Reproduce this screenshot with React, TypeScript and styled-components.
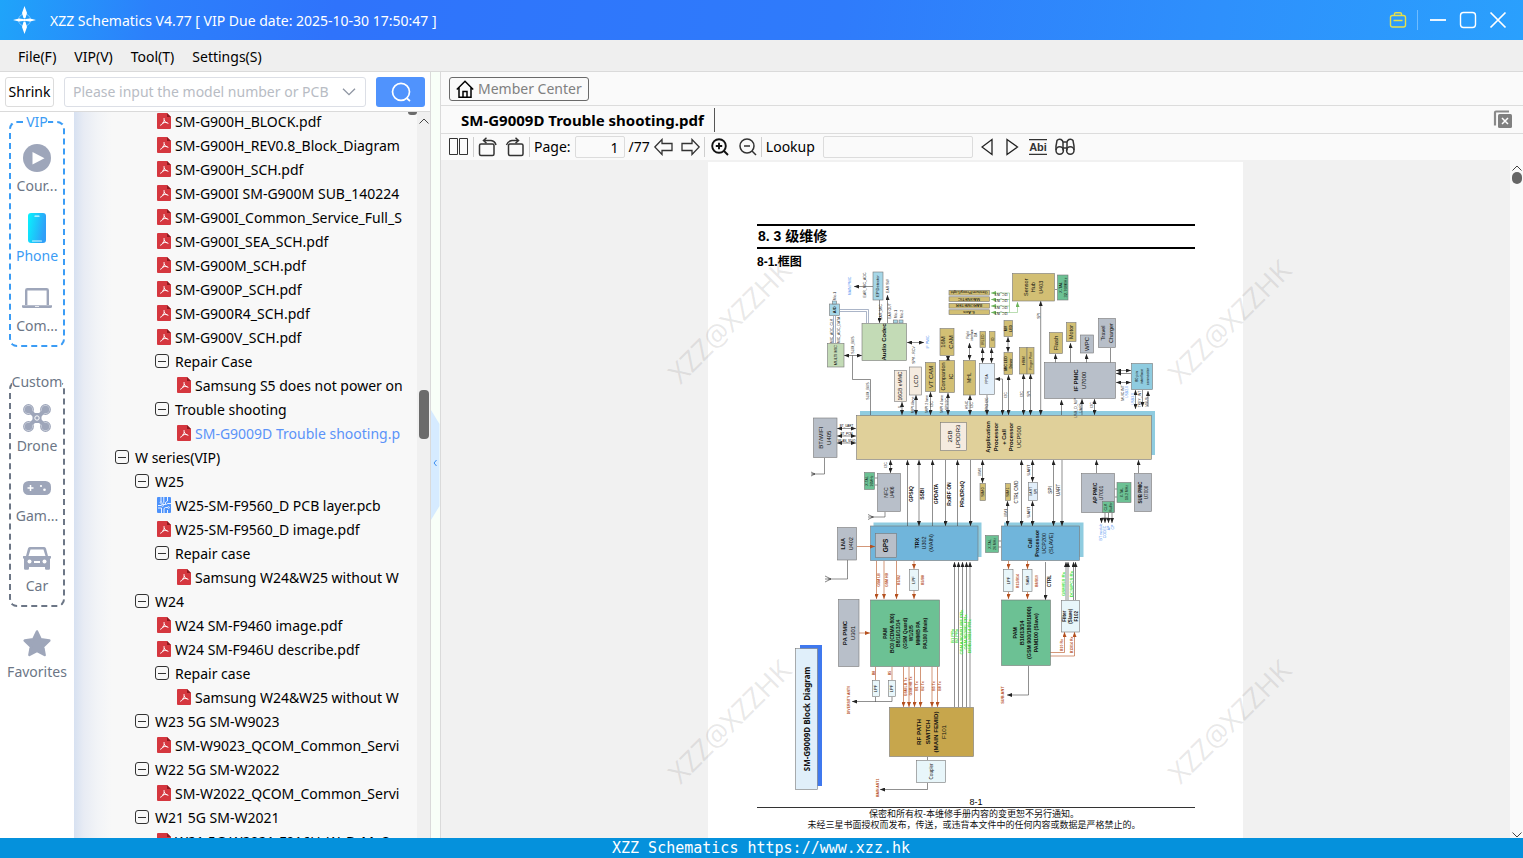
import React from 'react';
import styled, { createGlobalStyle, css } from 'styled-components';

const UI_FONT = '"Noto Sans", "Noto Sans CJK SC", sans-serif';
const DOC_FONT = '"Liberation Sans", "Noto Sans CJK SC", sans-serif';

const GlobalStyle = createGlobalStyle`
  * { box-sizing: border-box; }
  body { margin: 0; font-family: ${UI_FONT}; font-size: 14px; color: #000; }
  button, input { font: inherit; color: inherit; }
  button { cursor: pointer; }
`;

/* ---------- window frame ---------- */

const Window = styled.div`
  display: grid;
  grid-template-rows: 40px 32px minmax(0, 1fr) 20px;
  height: 100vh;
  overflow: hidden;
  background: #fff;
`;

const TitleBar = styled.header`
  display: flex;
  align-items: center;
  padding: 0 15px 0 12px;
  color: #fff;
  background: linear-gradient(100deg, #1fa4fa 0%, #2c80fb 10%, #2f73fb 22%, #2f7bfb 55%, #2e90fc 80%, #2aa0fd 100%);
`;

const Title = styled.h1`
  flex: 1;
  margin: 0 0 0 13px;
  font-size: 14px;
  font-weight: 400;
`;

const WindowControls = styled.div`
  display: flex;
  align-items: center;
  gap: 10px;
`;

const PlainButton = styled.button`
  display: inline-flex;
  align-items: center;
  justify-content: center;
  flex: none;
  padding: 0;
  border: 0;
  background: none;
`;

const TitleDivider = styled.span`
  width: 1px;
  height: 20px;
  background: #6fbcff;
`;

const MenuBar = styled.nav`
  display: flex;
  align-items: center;
  gap: 18px;
  padding: 2px 18px 0;
  background: #efefef;
  border-bottom: 1px solid #dadada;
`;

const MenuItem = styled(PlainButton)`
  line-height: 20px;
`;

const Workspace = styled.div`
  display: grid;
  grid-template-columns: 431px 10px minmax(0, 1fr);
  min-height: 0;
`;

const StatusBar = styled.footer`
  padding-right: 1px;
  color: #fff;
  background: #0591dc;
  font: 15px/20px "DejaVu Sans Mono", monospace;
  text-align: center;
`;

/* ---------- left pane ---------- */

const LeftPane = styled.section`
  display: grid;
  grid-template-rows: 40px minmax(0, 1fr);
  min-height: 0;
  border-right: 1px solid #dadada;
`;

const SearchRow = styled.form`
  display: flex;
  align-items: center;
  gap: 10px;
  padding: 0 5px;
  border-bottom: 1px solid #dadada;
`;

const ShrinkButton = styled(PlainButton)`
  width: 49px;
  height: 30px;
  border: 1px solid #dcdcdc;
  border-radius: 3px;
  background: #fff;
`;

const SearchBox = styled.div`
  display: flex;
  align-items: center;
  flex: 1;
  min-width: 0;
  height: 30px;
  padding: 0 9px 0 8px;
  border: 1px solid #dcdfe6;
  border-radius: 3px;
`;

const SearchInput = styled.input`
  flex: 1;
  min-width: 0;
  padding: 0;
  border: 0;
  outline: 0;
  background: none;
  &::placeholder { color: #b8bcc4; opacity: 1; }
`;

const SearchButton = styled(PlainButton)`
  width: 49px;
  height: 30px;
  border-radius: 3px;
  background: #5093fd;
`;

const Browser = styled.div`
  display: grid;
  grid-template-columns: 74px minmax(0, 1fr) 13px;
  min-height: 0;
`;

const Sidebar = styled.nav`
  display: flex;
  flex-direction: column;
  align-items: center;
  overflow: hidden;
`;

const Group = styled.fieldset<{ $accent?: boolean }>`
  display: flex;
  flex-direction: column;
  width: 56px;
  margin: 0 0 ${p => (p.$accent ? 25 : 20)}px;
  padding: 9px 0;
  border: 2px dashed ${p => (p.$accent ? '#3b9cf5' : '#6c7686')};
  border-radius: 8px;
  color: ${p => (p.$accent ? '#3b9cf5' : '#6c7686')};
`;

const GroupName = styled.legend`
  margin: 0 auto;
  padding: 0;
  line-height: 20px;
`;

const Category = styled(PlainButton)<{ $active?: boolean }>`
  flex-direction: column;
  gap: 1px;
  height: 55px;
  color: ${p => (p.$active ? '#3b9cf5' : '#6c7686')};
  line-height: 20px;
  & + & { margin-top: 15px; }
`;

const CategoryIcon = styled.span`
  display: flex;
  align-items: center;
  height: 34px;
`;

const Tree = styled.ul`
  position: relative;
  margin: 0;
  padding: 0;
  list-style: none;
  overflow: hidden;
  background: linear-gradient(90deg, #d7e1f1 0, #e8ecf4 10px, #f2f4f7 24px, #f8f8f8 38px);
  &::after {
    content: '';
    position: absolute;
    top: 0;
    right: 0;
    width: 9px;
    height: 3px;
    border-radius: 0 0 5px 5px;
    background: #6b6b6b;
  }
`;

const TreeRow = styled.li<{ $level: number; $active?: boolean }>`
  display: flex;
  align-items: center;
  gap: 3px;
  height: 24px;
  margin-right: 10px;
  padding-left: ${p => 40 + p.$level * 20}px;
  overflow: hidden;
  white-space: nowrap;
  color: ${p => (p.$active ? '#5b93f8' : '#000')};
  &:first-child { margin-top: -3px; }
`;

const RowIcon = styled.span<{ $folder?: boolean }>`
  display: flex;
  flex: none;
  width: 18px;
  padding: 0 1px;
  justify-content: ${p => (p.$folder ? 'flex-start' : 'flex-end')};
`;

const TreeScroll = styled.div`
  display: flex;
  flex-direction: column;
  align-items: center;
  padding-top: 6px;
  background: #f0f0f0;
`;

const TreeThumb = styled.span`
  width: 10px;
  height: 49px;
  margin-top: 266px;
  border-radius: 4px;
  background: #6b6b6b;
`;

const Splitter = styled.div`
  display: flex;
  align-items: flex-start;
  padding-top: 338px;
  background: #f8fff8;
  border-right: 1px solid #dadada;
`;

/* ---------- right pane ---------- */

const RightPane = styled.main`
  display: grid;
  grid-template-rows: 34px 28px 26px minmax(0, 1fr);
  min-width: 0;
  min-height: 0;
  background: #fafafa;
`;

const Bar = styled.div<{ $line?: boolean }>`
  display: flex;
  align-items: center;
  padding: 0 9px 0 8px;
  ${p => p.$line && css`border-bottom: 1px solid #dcdcdc;`}
`;

const MemberButton = styled(PlainButton)`
  gap: 4px;
  height: 24px;
  padding: 0 6px;
  border: 1px solid #6a6a6a;
  border-radius: 3px;
  color: #808080;
`;

const Tab = styled.button`
  height: 24px;
  padding: 0 10px 0 12px;
  border: 0;
  border-right: 1px solid #555;
  background: none;
  font-size: 15px;
  font-weight: 700;
  line-height: 22px;
`;

const Spacer = styled.span`
  flex: 1;
`;

const Cluster = styled.div<{ $gap: number; $divider?: boolean }>`
  display: flex;
  align-items: center;
  gap: ${p => p.$gap}px;
  height: 20px;
  ${p => p.$divider && css`
    padding-right: 4px;
    margin-right: 4px;
    border-right: 1px solid #cfcfcf;
  `}
`;

const Label = styled.label`
  line-height: 20px;
`;

const ToolInput = styled.input<{ $width: number }>`
  width: ${p => p.$width}px;
  height: 22px;
  padding: 0 5px;
  border: 1px solid #dcdcdc;
  border-radius: 2px;
  background: #fafafa;
  text-align: right;
`;

const Viewer = styled.div`
  display: grid;
  grid-template-columns: minmax(0, 1fr) 13px;
  min-height: 0;
`;

const Canvas = styled.div`
  position: relative;
  display: flex;
  justify-content: center;
  padding-top: 2px;
  overflow: hidden;
  background: #f1f1f1;
`;

const ViewerScroll = styled.div`
  display: flex;
  flex-direction: column;
  align-items: center;
  gap: 1px;
  padding-top: 5px;
  background: #fafafa;
`;

const ViewerThumb = styled.span`
  width: 10px;
  height: 12px;
  border-radius: 5px;
  background: #666;
`;

const ScrollEnd = styled.span`
  display: flex;
  margin-top: auto;
`;

const Page = styled.article`
  flex: none;
  width: 535px;
  height: 760px;
  background: #fff;
  font-family: ${DOC_FONT};
`;

const Chapter = styled.h2`
  margin: 62px 48px 0 49px;
  padding-left: 1px;
  border-top: 2px solid #000;
  border-bottom: 2px solid #000;
  font-size: 14px;
  line-height: 21px;
  word-break: keep-all;
`;

const Section = styled.h3`
  margin: 5px 0 0 49px;
  font-size: 12px;
  line-height: 17px;
`;

const Diagram = styled.svg`
  display: block;
  width: 535px;
  height: 526px;
`;

const PageFoot = styled.div`
  margin: 0 48px 0 49px;
  font-size: 9px;
  line-height: 11px;
  text-align: center;
`;

const PageNumber = styled.p`
  margin: 0;
  border-bottom: 1px solid #333;
  line-height: 10px;
`;

const Notice = styled.p`
  margin: 1px 4px 0 0;
  color: #111;
`;

const Watermark = styled.span<{ $x: number; $y: number }>`
  position: absolute;
  left: calc(50% + ${p => p.$x}px);
  top: ${p => p.$y}px;
  transform: translate(-50%, -50%) rotate(-45deg);
  color: rgba(120, 115, 115, 0.17);
  font: 28px/32px "Open Sans", sans-serif;
  white-space: nowrap;
  pointer-events: none;
`;

/* ---------- icons ---------- */

const Chevron = ({ up, color = '#444', size = 10 }: { up?: boolean; color?: string; size?: number }) => (
  <svg width={size} height={size / 2 + 1} viewBox="0 0 10 6" fill="none" stroke={color}>
    <path d={up ? 'M.5 5.5 5 1l4.500 4.500' : 'M.5 .5 5 5 9.500 .5'} />
  </svg>
);

const Logo = () => (
  <svg width="25" height="30" viewBox="0 0 25 30" fill="#fff">
    <circle cx="12.5" cy="15" r="6" fill="none" stroke="#9fd6ff" strokeWidth="1" opacity=".7" />
    <path d="M12.5 1 15 8l-1.5 5h-2L10 8ZM12.5 29 10 22l1.5-5h2l1.5 5ZM1 15l6-1.500 4 .6v1.800l-4 .6ZM24 15l-6-1.500-4 .6v1.800l4 .6Z" />
    <circle cx="12.5" cy="15" r="1.6" />
  </svg>
);

const PdfIcon = () => (
  <svg width="14" height="16" viewBox="0 0 14 16">
    <path d="M1 0h9l4 4v11a1 1 0 0 1-1 1H1a1 1 0 0 1-1-1V1a1 1 0 0 1 1-1Z" fill="#d5373f" />
    <path d="M10 0v4h4Z" fill="#8e1a20" />
    <path d="M7 5.5c-.2 2.200 1 4 4 4.800M7.200 7.500C6.800 9.500 5.500 11.500 3.600 12.200M5.300 10.200c1.300-.6 2.700-.9 4.500-.7" fill="none" stroke="#fff" strokeWidth="1" strokeLinecap="round" />
  </svg>
);

const PcbIcon = () => (
  <svg width="14" height="16" viewBox="0 0 14 16">
    <rect width="14" height="16" rx="1" fill="#4d92fb" />
    <path d="M4 0v5.500M6.800 0v5.500L4 8.500H1M10.500 0v4L8.500 5.500v2H5.500M14 6.500h-3.500l-1 1.200M1 11h3.500v5M7 16v-4.500l1.500-1h3.500M10.500 16v-3" fill="none" stroke="#fff" strokeWidth=".9" />
    <g fill="#4d92fb" stroke="#fff" strokeWidth=".7">
      <circle cx="4" cy="5.500" r=".9" /><circle cx="5.500" cy="8.500" r=".9" /><circle cx="11.500" cy="10.500" r=".9" />
    </g>
  </svg>
);

const CollapseIcon = () => (
  <svg width="14" height="14" viewBox="0 0 14 14" fill="none" stroke="#333">
    <rect x=".5" y=".5" width="13" height="13" rx="2.5" />
    <path d="M3 7.5h8" />
  </svg>
);

const GREY = '#9ea6ba';

const categoryIcons: Record<string, React.ReactNode> = {
  course: (
    <svg width="28" height="28" viewBox="0 0 28 28">
      <circle cx="14" cy="14" r="14" fill={GREY} />
      <path d="M9.5 8v12.500L21.500 14.200Z" fill="#fff" />
    </svg>
  ),
  phone: (
    <svg width="18" height="30" viewBox="0 0 18 30">
      <defs>
        <linearGradient id="phone" x1="0" x2="1" y1="0" y2=".3">
          <stop offset="0" stopColor="#08f4fd" />
          <stop offset="1" stopColor="#2f9ff8" />
        </linearGradient>
      </defs>
      <rect width="18" height="30" rx="3" fill="url(#phone)" />
      <path d="M7 3.200h4M4.500 28h9" stroke="#d8faff" strokeWidth="1.2" strokeLinecap="round" />
    </svg>
  ),
  computer: (
    <svg width="30" height="20" viewBox="0 0 30 20" fill="none" stroke={GREY}>
      <path d="M4.200 17V2.500a1.200 1.200 0 0 1 1.200-1.200h19.200a1.200 1.200 0 0 1 1.200 1.200V17" strokeWidth="2.4" />
      <path d="M0 17.200h30v1.300a1.500 1.500 0 0 1-1.500 1.500h-27A1.500 1.500 0 0 1 0 18.500Z" fill={GREY} stroke="none" />
      <path d="M13 18.500h4" stroke="#fff" strokeWidth=".8" />
    </svg>
  ),
  drone: (
    <svg width="28" height="28" viewBox="0 0 28 28">
      <path d="M7 7l14 14M21 7 7 21" stroke={GREY} strokeWidth="4" />
      <g fill="#e4e7ee" stroke={GREY} strokeWidth="1.2">
        <circle cx="5.5" cy="5.5" r="4.8" /><circle cx="22.5" cy="5.5" r="4.8" />
        <circle cx="5.5" cy="22.5" r="4.8" /><circle cx="22.5" cy="22.5" r="4.8" />
      </g>
      <g fill={GREY}>
        <circle cx="5.5" cy="5.5" r="3.8" /><circle cx="22.5" cy="5.5" r="3.8" />
        <circle cx="5.5" cy="22.5" r="3.8" /><circle cx="22.5" cy="22.5" r="3.8" />
        <rect x="9.5" y="9" width="9" height="10" rx="2.5" />
      </g>
      <path d="M5 6 10 10M23 6 18 10M5 22 10 18M23 22 18 18" stroke={GREY} strokeWidth="3" />
      <circle cx="14" cy="14" r="2.200" fill={GREY} stroke="#fff" strokeWidth="1" />
    </svg>
  ),
  game: (
    <svg width="28" height="14" viewBox="0 0 28 14">
      <rect width="28" height="14" rx="5.5" fill={GREY} />
      <path d="M4.500 7h6M7.500 4v6" stroke="#fff" strokeWidth="1.5" />
      <circle cx="18" cy="5" r="1.1" fill="#fff" /><circle cx="21.5" cy="8.7" r="1.3" fill="#fff" />
    </svg>
  ),
  car: (
    <svg width="28" height="23" viewBox="0 0 28 23">
      <path d="M7 0h14a2 2 0 0 1 2 1.500L25 9h2.500a.5.5 0 0 1 .5.5v2h-1v10a1.200 1.200 0 0 1-1.200 1.200h-2.600A1.200 1.200 0 0 1 22 21.500V20H6v1.500a1.200 1.200 0 0 1-1.200 1.200H2.200A1.200 1.200 0 0 1 1 21.500v-10H0v-2A.5.5 0 0 1 .5 9H3L5 1.500A2 2 0 0 1 7 0Z" fill={GREY} />
      <path d="M7.500 2.500h13L22.500 9h-17Z" fill="#fff" />
      <circle cx="6.5" cy="14.5" r="2" fill="#fff" /><circle cx="21.5" cy="14.5" r="2" fill="#fff" />
      <path d="M11 15h6" stroke="#fff" strokeWidth="2" />
    </svg>
  ),
  star: (
    <svg width="28" height="28" viewBox="0 0 28 28">
      <path d="M14 1.500l3.700 7.800 8.600 1.200-6.200 6 1.500 8.500L14 20.900 6.400 25l1.500-8.500-6.200-6 8.600-1.200Z" fill={GREY} stroke={GREY} strokeWidth="2.5" strokeLinejoin="round" />
    </svg>
  ),
};

/* ---------- block diagram ---------- */

const C = {
  gold: '#d2bf74', sand: '#e0d09a', cream: '#f5ebdf', grey: '#b8bfc9', green: '#6cc194', pale: '#c3dbb6',
  sky: '#a6d7e8', cyan: '#8fcce0', blue: '#70b5db', ice: '#e8f6fa', mist: '#e2effa', ochre: '#c7a64c',
};
const RUST = '#b5501f';
const LIME = '#42e23a';
const AZURE = '#4d8ff0';

type BlockSpec = [x: number, y: number, w: number, h: number, fill: string, text: string, size: number, boldLines?: number];

const blocks: BlockSpec[] = [
  [873, 272, 10, 28, C.sky, 'EP Detector', 4],
  [829.5, 304, 10, 11.5, C.sky, 'A/D', 4, 1],
  [832.5, 301, 4, 3, C.sky, '', 3],
  [893.5, 320, 4, 3, C.sky, '', 3],
  [899, 320, 4, 3, C.sky, '', 3],
  [827.5, 343.5, 16.5, 23.5, C.pale, 'MULTI MIC', 4],
  [862, 323.5, 44.5, 37, C.pale, 'Audio Codec', 6, 1],
  [894.5, 370.5, 12, 31, C.cream, '16GB eMMC', 5],
  [909.5, 367, 12, 28, C.cream, 'LCD', 6],
  [925.5, 362.5, 10, 29, C.gold, 'VT CAM', 6],
  [939.5, 360.5, 15, 32, C.gold, 'Companion|IC', 5.5],
  [940, 328.5, 14, 27, C.gold, '16M|CAM', 6],
  [963.5, 360.5, 12, 34.5, C.gold, 'MHL', 5],
  [980, 331.5, 5.5, 16, C.gold, 'IRLED', 3.5],
  [989.5, 331.5, 5.5, 16, C.gold, 'IO', 3.5],
  [979.5, 363.5, 15, 31, C.mist, 'FPGA', 3.5],
  [1012.5, 273.5, 42, 27.5, C.gold, 'Sensor|Hub|U403', 5.5],
  [1057.5, 275, 10.5, 25, C.green, 'X-TAL|32.768KHz', 4],
  [1004, 320.5, 8.5, 16, C.gold, 'MV|LED', 3.5, 2],
  [1004, 352.5, 8.5, 22, C.gold, 'MIC LED|Driver', 3.5, 2],
  [1019.5, 347.5, 7.5, 26.5, C.gold, 'HRM', 4],
  [1027, 347.5, 7, 26.5, C.gold, 'Finger Print', 3.5],
  [1049.5, 332.5, 13, 21, C.gold, 'Flash', 6],
  [1066.5, 322.5, 9.5, 19, C.gold, 'Motor', 5.5],
  [1080.5, 335, 13, 18, C.grey, 'WPC', 6],
  [1098.5, 318.5, 17, 29, C.grey, 'Travel|Charger', 5.5],
  [1044.5, 362.5, 71, 36, C.grey, 'IF PMIC|U7000', 6, 1],
  [1131.5, 363.5, 21, 26, C.cyan, '80 pin|interface|connector', 4],
  [940.5, 422.5, 26, 28, C.cream, '2GB|LPDDR3', 6],
  [813.5, 418, 23.5, 39.5, C.grey, 'BT/WIFI|U405', 6],
  [864.5, 472.5, 10, 17, C.green, 'X-TAL|26MHz', 3.5],
  [877.5, 473.5, 23, 38, C.grey, 'NFC|U406', 5],
  [875.5, 533.5, 21, 24, C.grey, 'GPS', 6.5, 1],
  [837.5, 527.5, 19, 32.5, C.grey, 'LNA|U402', 5.5, 1],
  [909.5, 569.5, 9, 21, C.ice, 'LPF', 4],
  [838.5, 599.5, 20.5, 67, C.grey, 'PA PMIC|U301', 6, 1],
  [870.5, 600, 69, 66.5, C.green, 'PAM|BC0 (CDMA 800)|B8/10/13/14|(GSM Quard)|W1/2/5|MMMB PA|PA100 (Main)', 5, 7],
  [980, 483.5, 5.5, 17, C.gold, 'SIM0', 4],
  [985.5, 535.5, 13, 17, C.green, 'X-TAL|26 MHz', 3.5],
  [1005.5, 483.5, 5, 17, C.gold, 'SIM1', 4],
  [1028.5, 482.5, 9, 18, C.mist, 'UART|SPI', 3.5],
  [1081.5, 473.5, 33, 39, C.grey, 'AP PMIC|U7001', 5, 1],
  [1102.5, 501.5, 11.5, 11, C.green, 'CLK|Buffer', 3.5],
  [1117, 482.5, 14, 20, C.green, 'X-TAL|19.2 MHz', 3.5],
  [1134.5, 473.5, 17, 38, C.grey, 'SUB PMIC|U7006', 4.5, 1],
  [1003.5, 569.5, 9.5, 22, C.ice, 'LPF', 4],
  [1022.5, 569.5, 9.5, 22, C.ice, 'SAW', 4],
  [1001.5, 600, 49, 65.5, C.green, 'PAM|B10/13/14|(GSM 900/1800/1900)|PAM100 (Slave)', 5.3, 4],
  [1061.5, 600.5, 18, 31.5, C.ice, 'Filter|(Slave)|F102', 4.5, 3],
  [872.5, 680.5, 7, 16, C.ice, 'LPF', 4],
  [888.5, 680.5, 7, 16, C.ice, 'LPF', 4],
  [889.5, 707.5, 84, 49, C.ochre, 'RF PATH|SWITCH|(MAIN FEMID)|F101', 6.2, 3],
  [916.5, 760.5, 29, 22, C.ice, 'Coupler', 4.5],
];

const Upright = ({ x, y, text, size, bold = 0, fill = '#111' }: { x: number; y: number; text: string; size: number; bold?: number; fill?: string }) => {
  const lines = text.split('|');
  const pitch = size * 1.32;
  return (
    <>
      {lines.map((line, i) => (
        <text
          key={i}
          transform={`translate(${x + (i - (lines.length - 1) / 2) * pitch + size * 0.36} ${y}) rotate(-90)`}
          textAnchor="middle"
          fontSize={size}
          fontWeight={i < bold ? 700 : 400}
          fill={fill}
        >
          {line}
        </text>
      ))}
    </>
  );
};

const Block = ({ spec: [x, y, w, h, fill, text, size, bold] }: { spec: BlockSpec }) => (
  <g>
    <rect x={x} y={y} width={w} height={h} fill={fill} stroke="#777" strokeWidth=".6" />
    <Upright x={x + w / 2} y={y + h / 2} text={text} size={size} bold={bold} />
  </g>
);

/* heads: s = start, e = end, b = both */
type WireSpec = [d: string, heads?: 's' | 'e' | 'b' | ''];

const blackWires: WireSpec[] = [
  ['M873 286.5H854', 'e'], ['M879.5 300V323', 'e'], ['M887.5 323V295', 'e'], ['M844 355.5H862', 'b'], ['M852.5 355.5V379.5H870.5V415'],
  ['M907 342.5H924', 'b'], ['M902 402V415', 'b'], ['M916 395V415', 'b'], ['M930.5 392V415', 'b'], ['M948 393V415', 'b'], ['M948 356V361', 'b'],
  ['M970 395V415', 'b'], ['M969.5 343V360', 'b'], ['M982.5 348V363', 'b'], ['M991.5 348V363', 'b'], ['M987 395V415', 'e'],
  ['M995 379H1002.5V415', 'b'], ['M1008 337V352', 'b'], ['M1008.5 375V415', 'b'], ['M1023.5 374V415', 'b'], ['M1030.5 374V415', 'b'],
  ['M1040.7 301V415', 'b'], ['M1055.5 363V354', 'e'], ['M1070.5 363V343', 'e'], ['M1086.5 363V354', 'e'], ['M1110.5 363V348'],
  ['M1061.5 415V400', 'e'], ['M1082 415V399', 'e'], ['M1094.5 399V415', 'b'], ['M1116 370.5H1131', 'b'], ['M1116 373.5H1131', 's'], ['M1116 382.5H1131', 'b'],
  ['M1135.5 390V409', 'b'], ['M1142.5 390V407', 'e'], ['M1148 407V391', 'e'], ['M1055 289.5H1057'],
  ['M837 428.5H856', 'b'], ['M837 436H856', 'b'], ['M837 443H856', 'b'], ['M824.5 458V474H812'], ['M890.5 460V473', 'b'], ['M875 478H878M875 485H878'],
  ['M885 512V517H871'], ['M847.5 560V579H828'], ['M907.5 526V460', 'e'], ['M919 526V460', 'b'], ['M932.5 526V460', 'e'], ['M945.5 460V526', 'e'],
  ['M957.5 526V460', 'e'], ['M970.5 460V526', 'e'], ['M982.5 460V483', 'b'], ['M1007.5 501V526', 'b'], ['M1021.5 460V526', 'b'],
  ['M1032.5 460V482', 'b'], ['M1032.5 501V526', 'b'], ['M1053.5 460V526', 'b'], ['M1062 460V526', 'e'], ['M1096.5 473V460', 'e'], ['M1138.5 473V460', 'e'],
  ['M1115 489H1117M1115 497H1117M998 541H1001M998 547H1001'], ['M1105 513V523', 'e'], ['M1108.5 513V523', 'e'], ['M1112 513V523', 'e'], ['M1108 518H1101.5V523', 'e'],
  ['M1045.5 562V600', 'e'], ['M1066 600V562', 'e'], ['M1068 600V562', 'e'], ['M1073.5 600V562', 'e'], ['M1075.5 600V562', 'e'],
  ['M954.5 707V562', 'e'], ['M958.5 707V562', 'e'], ['M962.5 707V562', 'e'], ['M966.5 707V562', 'e'], ['M970 707V562', 'e'],
  ['M1028.5 666V695H1007', 'e'], ['M875.5 697V701.5H852', 'e'], ['M892 697V701.5H875'], ['M927.5 757V760'], ['M927.5 783V789.5H880', 'e'],
];

const rustWires: WireSpec[] = [
  ['M857 546.5H875', 'e'], ['M859 633H870', 'e'], ['M876.5 561V599', 'e'], ['M884 561V599', 'e'], ['M896.5 561V599', 'e'], ['M914 561V569', 'e'], ['M914 590V599', 'e'],
  ['M1008.5 561V569', 'e'], ['M1027.5 561V569', 'e'], ['M1008.5 592V599', 'e'], ['M1027.5 592V599', 'e'], ['M1050 652.5H1064.5V632', 'e'], ['M1050 656H1074.5V632', 'e'],
  ['M875.5 667V680'], ['M892 667V680'], ['M903.5 667V707', 'e'], ['M909 667V707', 'e'], ['M914.5 667V707', 'e'], ['M920.5 667V707', 'e'], ['M932 667V707', 'e'], ['M937.5 667V707', 'e'],
];

const greenWires: WireSpec[] = [
  ['M1009.5 312.5V293H991', 'e'], ['M1009.5 299.5H991', 'e'], ['M1009.5 306H991', 'e'], ['M1017.5 302V312.5H991', 'b'],
];

type NoteSpec = [x: number, y: number, text: string, size: number, fill?: string, bold?: number];

const notes: NoteSpec[] = [
  [850, 286, 'MAIN PMIC', 3.5, AZURE], [865, 285, 'EAR_MIC_ADC', 3.5], [888, 286, 'EAR SW', 3.5], [881, 312, 'EAR_MIC', 3.5], [890, 311, 'EAR OUT', 3.5],
  [895.5, 314, 'Mic-1', 3.5], [901.5, 314, 'Mic-2', 3.5], [835, 296, 'Mic-1', 3.5], [831.5, 331, 'MIC_ADC_CLK', 3.5], [839, 330, 'MIC_ADC_DATA', 3.5], [852.5, 345, 'SLIM_BUS', 3.5],
  [867.5, 391, 'SLIM_BUS', 3.5], [914, 355, 'SPK - RCV', 3.5], [927.5, 342, 'IF PMIC', 3.5, AZURE], [900, 407, '1', 3.5], [912.5, 405, 'MIPI 4lane', 3.5],
  [929, 404, 'MIPI 2 lane|I2C', 3.5], [944, 404, 'MIPI 4 lane|SPI,I2C', 3.5], [969, 405, 'HSIC|I2C', 3.5], [972, 335, 'Flight|interface|I2A', 3], [987, 405, 'GPIO I2C', 3.5],
  [1006, 395, 'I2C', 3.5], [1021.5, 394, 'I2C', 3.5], [1028.5, 394, 'SPI', 3.5], [1039, 316, 'SPI', 3.5], [1078, 408, 'USB_D_M,P|UART', 3.5], [1092, 405, 'I2C', 3.5],
  [1122.5, 393, 'MUIC INT', 3.5], [1126.5, 392, 'USB2.0', 3.5, AZURE], [1133, 399, 'USB3.0', 3.5, AZURE], [1140, 399, 'TKEY_INT', 3.5], [1147, 402, 'VBUS', 3.5],
  [846, 426, 'BT_UART', 3], [886, 465, 'I2C', 3.5], [911, 494, 'GPSIQ', 5, '#111', 1], [922.5, 494, 'SSBI', 5, '#111', 1], [936, 494, 'GPDATA', 5, '#111', 1], [949, 494, 'Rx/RF ON', 5, '#111', 1],
  [962.5, 494, 'PRx/DRxIQ', 5, '#111', 1], [980, 472, 'UIM0', 3.5], [1016, 492, 'CTRL CMD', 4.5], [1005.5, 513, 'UIM1', 3.5], [1029, 470, 'UART', 4], [1029, 512, 'UART', 4], [1050, 490, 'SPI', 4.5],
  [1058, 490, 'UART', 4.5], [1101, 532, 'BT module', 3.5, AZURE], [1105, 532, 'CODEC', 3.5, AZURE], [1109, 528, 'AP', 3.5, AZURE], [1112.5, 527, 'CP', 3.5, AZURE],
  [878.5, 580, 'GSM LB', 3.5, RUST, 1], [886.5, 580, 'GSM HB', 3.5, RUST, 1], [899, 580, 'B1/B2', 3.5, RUST, 1], [923, 580, 'B5/B8', 3.5, RUST, 1], [1017.5, 581, 'B13/B14', 3.5, RUST, 1], [1036.5, 581, 'B8/B10', 3.5, RUST, 1],
  [1049.5, 581, 'CTRL', 4.5, '#111', 1], [1063, 584, 'GSM850 Rx', 4.4, LIME, 1], [1071.5, 584, 'DCS/PCS Rx', 4.4, LIME, 1],
  [953, 636, 'B1 PRx', 4, LIME, 1], [957, 636, 'B2 PRx', 4, LIME, 1], [961, 632, 'CDMA/800/B1/B8 PRx', 4.4, LIME, 1], [965, 632, 'GSM/850/B5 PRx', 4.4, LIME, 1], [969, 636, 'B8/B13/B14 PRx', 4.4, LIME, 1],
  [1062, 645, 'B10 Rx', 3.5, RUST, 1], [1072, 645, 'B13/14 Rx', 3.5, RUST, 1], [1003, 695, 'SUB ANT', 4, RUST, 1], [873.5, 673, 'B8', 3.5, RUST, 1], [890, 673, 'B5', 3.5, RUST, 1],
  [905.5, 687, 'GSM LB Tx', 3.5, RUST, 1], [911, 686, 'GSM HB Tx', 3.5, RUST, 1], [916.5, 686, 'B1 Tx', 3.5, RUST, 1], [922.5, 686, 'B2 Tx', 3.5, RUST, 1], [934, 686, 'B5 Tx', 3.5, RUST, 1], [939.5, 686, 'B8 Tx', 3.5, RUST, 1],
  [849, 700, 'DIVERSITY ANT0', 3.5, RUST, 1], [877.5, 788, 'MAIN ANT1', 3.5, RUST, 1],
];

const WireSet = ({ wires, color, head }: { wires: WireSpec[]; color: string; head: string }) => (
  <g fill="none" stroke={color} strokeWidth=".6">
    {wires.map(([d, heads], i) => (
      <path
        key={i}
        d={d}
        markerStart={heads === 's' || heads === 'b' ? `url(#${head})` : undefined}
        markerEnd={heads === 'e' || heads === 'b' ? `url(#${head})` : undefined}
      />
    ))}
  </g>
);

const BlockDiagram = () => (
  <Diagram viewBox="708 271 535 526" role="img" aria-label="SM-G9009D Block Diagram">
    <defs>
      {[['ink', '#222'], ['rust', RUST], ['leaf', '#6db35c']].map(([id, color]) => (
        <marker key={id} id={id} viewBox="0 0 5 4" refX="5" refY="2" markerWidth="5" markerHeight="4" markerUnits="userSpaceOnUse" orient="auto-start-reverse">
          <path d="M0 0 5 2 0 4Z" fill={color} />
        </marker>
      ))}
    </defs>
    <g fill={C.cyan}>
      <rect x="860" y="411" width="295" height="44" />
      <rect x="873.5" y="522.5" width="108" height="34.5" />
      <rect x="1004" y="522.5" width="79.5" height="34.5" />
    </g>
    <rect x="800" y="645" width="22" height="141" fill="#3f78ee" />
    <g fill="none" stroke="#8795b0" strokeWidth=".7">
      <path d="M833.5 343V316M835.5 343V316M840 309.5H868.5V323M840 311.5H866.5V323" />
    </g>
    <Block spec={[856.5, 415.5, 295, 44, C.sand, '', 6]} />
    <Block spec={[870.5, 526, 107.5, 34.5, C.blue, '', 6]} />
    <Block spec={[1001.5, 526, 78, 34.5, C.blue, 'Call|Processor|UCP200|(SLAVE)', 5.5, 2]} />
    <Block spec={[795.5, 648.5, 22, 141, '#e0effa', '', 6]} />
    <g fontFamily="Noto Sans">
      <Upright x={807} y={719} text="SM-G9009D Block Diagram" size={8} bold={1} />
    </g>
    <Upright x={924} y={543} text="TRX|U302|(MAIN)" size={5.5} bold={1} />
    <Upright x={1003.5} y={437} text="Application|Processor|+ Call|Processor|UCP500" size={5.8} bold={4} />
    <WireSet wires={blackWires} color="#444" head="ink" />
    <WireSet wires={rustWires} color={RUST} head="rust" />
    <WireSet wires={greenWires} color="#8cc67d" head="leaf" />
    {['Gesture/Proxy/Light', 'MAGNETIC', 'BAROMETER', '6-Axis'].map((name, i) => (
      <g key={name}>
        <rect x="949" y={290.3 + i * 6.5} width="40.5" height="4.8" fill={C.gold} stroke="#777" strokeWidth=".6" />
        <text transform={`translate(969 ${291.2 + i * 6.5}) rotate(180)`} textAnchor="middle" fontSize="4.2">{name}</text>
        <text transform={`translate(1001 ${292.5 + i * 6.5}) rotate(180)`} textAnchor="middle" fontSize="3.5">I2C_INT</text>
      </g>
    ))}
    {blocks.map((spec, i) => <Block key={i} spec={spec} />)}
    <g fontSize="3">
      {['BT_UART', 'BT_PCM', 'WLAN_SDIO'].map((name, i) => (
        <text key={name} x="846.5" y={427.3 + i * 7.3} textAnchor="middle">{name}</text>
      ))}
    </g>
    {notes.filter(([, , text]) => text !== 'BT_UART').map(([x, y, text, size, fill, bold], i) => (
      <Upright key={i} x={x} y={y} text={text} size={size} fill={fill || '#222'} bold={bold} />
    ))}
    <path d="M815 474l-4-2M815 474l-4 2M811 474h4M873 517l-5-2.5M873 517l-5 2.500M868 517h6M831 579l-6-3M831 579l-6 3M825 579h6" fill="none" stroke="#333" strokeWidth=".6" />
  </Diagram>
);

/* ---------- data ---------- */

type Kind = 'pdf' | 'pcb' | 'folder';
const tree: [number, Kind, string, boolean?][] = [
  [2, 'pdf', 'SM-G900H_BLOCK.pdf'],
  [2, 'pdf', 'SM-G900H_REV0.8_Block_Diagram'],
  [2, 'pdf', 'SM-G900H_SCH.pdf'],
  [2, 'pdf', 'SM-G900I SM-G900M SUB_140224'],
  [2, 'pdf', 'SM-G900I_Common_Service_Full_S'],
  [2, 'pdf', 'SM-G900I_SEA_SCH.pdf'],
  [2, 'pdf', 'SM-G900M_SCH.pdf'],
  [2, 'pdf', 'SM-G900P_SCH.pdf'],
  [2, 'pdf', 'SM-G900R4_SCH.pdf'],
  [2, 'pdf', 'SM-G900V_SCH.pdf'],
  [2, 'folder', 'Repair Case'],
  [3, 'pdf', 'Samsung S5 does not power on'],
  [2, 'folder', 'Trouble shooting'],
  [3, 'pdf', 'SM-G9009D Trouble shooting.p', true],
  [0, 'folder', 'W series(VIP)'],
  [1, 'folder', 'W25'],
  [2, 'pcb', 'W25-SM-F9560_D PCB layer.pcb'],
  [2, 'pdf', 'W25-SM-F9560_D image.pdf'],
  [2, 'folder', 'Repair case'],
  [3, 'pdf', 'Samsung W24&W25 without W'],
  [1, 'folder', 'W24'],
  [2, 'pdf', 'W24 SM-F9460 image.pdf'],
  [2, 'pdf', 'W24 SM-F946U describe.pdf'],
  [2, 'folder', 'Repair case'],
  [3, 'pdf', 'Samsung W24&W25 without W'],
  [1, 'folder', 'W23 5G SM-W9023'],
  [2, 'pdf', 'SM-W9023_QCOM_Common_Servi'],
  [1, 'folder', 'W22 5G SM-W2022'],
  [2, 'pdf', 'SM-W2022_QCOM_Common_Servi'],
  [1, 'folder', 'W21 5G SM-W2021'],
  [2, 'pdf', 'W21 5G W2021-F916U_W_B_M_O'],
];

const kindIcon = { pdf: <PdfIcon />, pcb: <PcbIcon />, folder: <CollapseIcon /> };

const CategoryItem = ({ icon, name, active }: { icon: string; name: string; active?: boolean }) => (
  <Category type="button" $active={active}>
    <CategoryIcon>{categoryIcons[icon]}</CategoryIcon>
    {name}
  </Category>
);

export default function App() {
  return (
    <Window>
      <GlobalStyle />
      <TitleBar>
        <Logo />
        <Title>XZZ Schematics V4.77 [ VIP Due date: 2025-10-30 17:50:47 ]</Title>
        <WindowControls>
          <PlainButton aria-label="Toolbox">
            <svg width="18" height="18" viewBox="0 0 18 18" fill="none" stroke="#e6e04a" strokeWidth="1.4">
              <rect x="1.5" y="4.5" width="15" height="11.5" rx="2" />
              <path d="M5.500 4.500V3a1.300 1.300 0 0 1 1.300-1.300h4.400A1.300 1.300 0 0 1 12.500 3v1.500M4.500 9.500h9" />
            </svg>
          </PlainButton>
          <TitleDivider />
          <PlainButton aria-label="Minimize">
            <svg width="20" height="20" viewBox="0 0 20 20" stroke="#fff" strokeWidth="1.8"><path d="M2 10h16" /></svg>
          </PlainButton>
          <PlainButton aria-label="Maximize">
            <svg width="20" height="20" viewBox="0 0 20 20" fill="none" stroke="#fff" strokeWidth="1.4"><rect x="2.5" y="2.5" width="15" height="15" rx="3" /></svg>
          </PlainButton>
          <PlainButton aria-label="Close">
            <svg width="20" height="20" viewBox="0 0 20 20" stroke="#fff" strokeWidth="1.7"><path d="M2.500 2.500l15 15M17.500 2.500l-15 15" /></svg>
          </PlainButton>
        </WindowControls>
      </TitleBar>

      <MenuBar>
        {['File(F)', 'VIP(V)', 'Tool(T)', 'Settings(S)'].map(name => <MenuItem key={name}>{name}</MenuItem>)}
      </MenuBar>

      <Workspace>
        <LeftPane>
          <SearchRow onSubmit={e => e.preventDefault()}>
            <ShrinkButton type="button">Shrink</ShrinkButton>
            <SearchBox>
              <SearchInput aria-label="Model number" placeholder="Please input the model number or PCB" />
              <Chevron color="#8f96a3" size={14} />
            </SearchBox>
            <SearchButton aria-label="Search">
              <svg width="20" height="20" viewBox="0 0 20 20" fill="none" stroke="#fff" strokeWidth="1.7">
                <circle cx="10" cy="9.8" r="8.5" /><path d="M15.500 16l3.500 3" />
              </svg>
            </SearchButton>
          </SearchRow>
          <Browser>
            <Sidebar>
              <Group $accent>
                <GroupName>VIP</GroupName>
                <CategoryItem icon="course" name="Cour..." />
                <CategoryItem icon="phone" name="Phone" active />
                <CategoryItem icon="computer" name="Com..." />
              </Group>
              <Group>
                <GroupName>Custom</GroupName>
                <CategoryItem icon="drone" name="Drone" />
                <CategoryItem icon="game" name="Gam..." />
                <CategoryItem icon="car" name="Car" />
              </Group>
              <CategoryItem icon="star" name="Favorites" />
            </Sidebar>
            <Tree>
              {tree.map(([level, kind, name, active], i) => (
                <TreeRow key={i} $level={level} $active={active}>
                  <RowIcon $folder={kind === 'folder'}>{kindIcon[kind]}</RowIcon>
                  {name}
                </TreeRow>
              ))}
            </Tree>
            <TreeScroll>
              <Chevron up />
              <TreeThumb />
            </TreeScroll>
          </Browser>
        </LeftPane>

        <Splitter>
          <svg width="9" height="110" viewBox="0 0 9 110">
            <path d="M0 0 8.500 14V96L0 110Z" fill="#d6ebff" />
            <path d="M5.500 50 3 53l2.500 3" fill="none" stroke="#3b8df0" />
          </svg>
        </Splitter>

        <RightPane>
          <Bar $line>
            <MemberButton>
              <svg width="18" height="18" viewBox="0 0 18 18" fill="none" stroke="#000" strokeWidth="1.5">
                <path d="M.8 9.500 9 1.200l8.200 8.300M3 7.500v9.700h12V7.500M7 17v-5.500h4V17" />
              </svg>
              Member Center
            </MemberButton>
          </Bar>
          <Bar $line>
            <Tab>SM-G9009D Trouble shooting.pdf</Tab>
            <Spacer />
            <PlainButton aria-label="Close all tabs">
              <svg width="22" height="20" viewBox="0 0 22 20">
                <path d="M3 15.500V2.500a1 1 0 0 1 1-1h13" fill="none" stroke="#8a8a8a" strokeWidth="2.2" />
                <rect x="6" y="4" width="14" height="14" rx="1.5" fill="#808080" />
                <path d="M10 8l6 6M16 8l-6 6" stroke="#fff" strokeWidth="1.5" />
              </svg>
            </PlainButton>
          </Bar>
          <Bar>
            <Cluster $gap={0} $divider>
              <PlainButton aria-label="Two pages">
                <svg width="20" height="18" viewBox="0 0 20 18" fill="none" stroke="#333"><path d="M.5 .5h8v16h-8ZM10.500 .5h8v16h-8Z" /></svg>
              </PlainButton>
            </Cluster>
            <Cluster $gap={7} $divider>
              <PlainButton aria-label="Rotate left">
                <svg width="20" height="20" viewBox="0 0 20 20" fill="none" stroke="#333" strokeWidth="1.5">
                  <rect x="1.5" y="7" width="14.5" height="11.5" rx="1.5" /><path d="M6 3.500h7q4 .5 5 4.500M8.500 .8 5.500 3.500l3 2.700" />
                </svg>
              </PlainButton>
              <PlainButton aria-label="Rotate right">
                <svg width="20" height="20" viewBox="0 0 20 20" fill="none" stroke="#333" strokeWidth="1.5">
                  <rect x="3.5" y="7" width="14.5" height="11.5" rx="1.5" /><path d="M13 3.500H7Q3 4 1.500 8M10.500 .8l3 2.700-3 2.700" />
                </svg>
              </PlainButton>
            </Cluster>
            <Cluster $gap={4} $divider>
              <Label htmlFor="page">Page:</Label>
              <ToolInput id="page" $width={50} defaultValue="1" />
              <Label as="span">/77</Label>
              <PlainButton aria-label="Previous page">
                <svg width="19" height="18" viewBox="0 0 19 18" fill="none" stroke="#333" strokeWidth="1.3"><path d="M.8 9 8 1.500v4h10v7H8v4Z" /></svg>
              </PlainButton>
              <PlainButton aria-label="Next page">
                <svg width="23" height="18" viewBox="-4 0 23 18" fill="none" stroke="#333" strokeWidth="1.3"><path d="M18.200 9 11 1.500v4H1v7h10v4Z" /></svg>
              </PlainButton>
            </Cluster>
            <Cluster $gap={8} $divider>
              <PlainButton aria-label="Zoom in">
                <svg width="20" height="18" viewBox="-2 0 20 18" fill="none" stroke="#111" strokeWidth="1.9"><circle cx="8" cy="8" r="6.8" /><path d="M13 13l4 4M4.800 8h6.400M8 4.800v6.400" /></svg>
              </PlainButton>
              <PlainButton aria-label="Zoom out">
                <svg width="20" height="18" viewBox="-2 0 20 18" fill="none" stroke="#333" strokeWidth="1.5"><circle cx="8" cy="8" r="7" /><path d="M13 13l4 4M5 8h6" /></svg>
              </PlainButton>
            </Cluster>
            <Cluster $gap={8}>
              <Label htmlFor="lookup">Lookup</Label>
              <ToolInput id="lookup" $width={150} />
              <PlainButton aria-label="Find previous">
                <svg width="12" height="18" viewBox="0 0 12 18" fill="none" stroke="#222" strokeWidth="1.3"><path d="M11 1.500v15L1 9Z" /></svg>
              </PlainButton>
              <PlainButton aria-label="Find next">
                <svg width="18" height="18" viewBox="-5 0 18 18" fill="none" stroke="#222" strokeWidth="1.3"><path d="M1 1.500v15L11.500 9Z" /></svg>
              </PlainButton>
              <PlainButton aria-label="Whole word">
                <svg width="20" height="16" viewBox="-2 0 20 16">
                  <path d="M0 .7h18M0 15.300h18" stroke="#333" strokeWidth="1.2" />
                  <text x="9" y="12" textAnchor="middle" fontFamily="Liberation Sans" fontSize="11" fontWeight="700" fill="#333">Abi</text>
                </svg>
              </PlainButton>
              <PlainButton aria-label="Find in document">
                <svg width="20" height="18" viewBox="0 0 20 18" fill="none" stroke="#333" strokeWidth="1.5">
                  <circle cx="4.7" cy="12.5" r="3.7" /><circle cx="15.3" cy="12.5" r="3.7" />
                  <path d="M1 12V8l1-5.500Q3.500 .5 6 1.500q2 1 2 3v8M19 12V8l-1-5.500Q16.500 .5 14 1.500q-2 1-2 3v8M8 4h4M8 10h4" />
                </svg>
              </PlainButton>
            </Cluster>
          </Bar>
          <Viewer>
            <Canvas>
              <Page>
                <Chapter>8. 3 级维修</Chapter>
                <Section>8-1.框图</Section>
                <BlockDiagram />
                <PageFoot>
                  <PageNumber>8-1</PageNumber>
                  <Notice>保密和所有权-本维修手册内容的变更恕不另行通知。<br />未经三星书面授权而发布，传送，或违背本文件中的任何内容或数据是严格禁止的。</Notice>
                </PageFoot>
              </Page>
              <Watermark $x={-247} $y={161}>XZZ@XZZHK</Watermark>
              <Watermark $x={253} $y={161}>XZZ@XZZHK</Watermark>
              <Watermark $x={-247} $y={561}>XZZ@XZZHK</Watermark>
              <Watermark $x={253} $y={561}>XZZ@XZZHK</Watermark>
            </Canvas>
            <ViewerScroll>
              <Chevron up />
              <ViewerThumb />
              <ScrollEnd><Chevron /></ScrollEnd>
            </ViewerScroll>
          </Viewer>
        </RightPane>
      </Workspace>

      <StatusBar>XZZ Schematics https://www.xzz.hk</StatusBar>
    </Window>
  );
}
